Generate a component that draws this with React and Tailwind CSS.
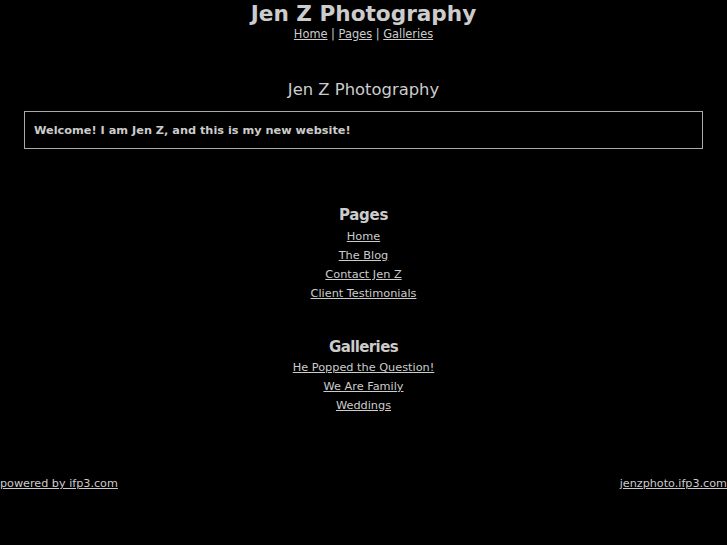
export default function App() {
  const font = { fontFamily: '"DejaVu Sans", sans-serif' };
  return (
    <div className="min-h-[545px] w-full bg-black text-[#cccccc]" style={font}>
      <div className="text-center">
        <div className="text-[21.6px] font-bold leading-[27px]">Jen Z Photography</div>
        <div className="text-[11.4px] leading-[15px]">
          <a href="#" className="underline">Home</a> | <a href="#" className="underline">Pages</a> | <a href="#" className="underline">Galleries</a>
        </div>
        <div className="mt-[38px] text-[16.4px] leading-[20px]">Jen Z Photography</div>
      </div>
      <div className="mx-[24px] mt-[11px] flex h-[38px] items-center border border-[#aaaaaa] px-[9px] text-[11.3px] font-bold leading-[15px]">
        Welcome! I am Jen Z, and this is my new website!
      </div>
      <div className="mt-[56px] text-center">
        <div className="text-[15px] font-bold leading-[20px] tracking-[-0.3px]">Pages</div>
        <div className="mt-[2px] flex flex-col items-center text-[11.3px] leading-[19px]">
          <a href="#" className="underline">Home</a>
          <a href="#" className="underline">The Blog</a>
          <a href="#" className="underline">Contact Jen Z</a>
          <a href="#" className="underline">Client Testimonials</a>
        </div>
        <div className="mt-[34px] text-[15px] font-bold leading-[20px] tracking-[-0.6px]">Galleries</div>
        <div className="mt-[1px] flex flex-col items-center text-[11.3px] leading-[19px]">
          <a href="#" className="underline">He Popped the Question!</a>
          <a href="#" className="underline">We Are Family</a>
          <a href="#" className="underline">Weddings</a>
        </div>
      </div>
      <div className="mt-[61px] flex justify-between text-[11.2px] leading-[15px]">
        <a href="#" className="underline">powered by ifp3.com</a>
        <a href="#" className="underline">jenzphoto.ifp3.com</a>
      </div>
    </div>
  );
}
